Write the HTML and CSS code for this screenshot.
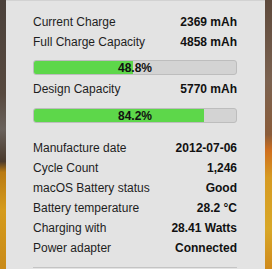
FILE: index.html
```html
<!DOCTYPE html>
<html>
  <head>
    <meta charset="utf-8">
    <title>Battery</title>
    <link rel="stylesheet" href="styles.css">
  </head>
  <body>
    <div class="desk">
      <div class="wall wall-left"></div>
      <div class="menu">
        <div class="row"><span>Current Charge</span><b>2369 mAh</b></div>
        <div class="row"><span>Full Charge Capacity</span><b>4858 mAh</b></div>
        <div class="bar">
          <div class="fill" style="width: 48.8%"></div>
          <span class="pct">48.8%</span>
        </div>
        <div class="row row-design"><span>Design Capacity</span><b>5770 mAh</b></div>
        <div class="bar">
          <div class="fill" style="width: 84.2%"></div>
          <span class="pct">84.2%</span>
        </div>
        <div class="details">
          <div class="row"><span>Manufacture date</span><b>2012-07-06</b></div>
          <div class="row"><span>Cycle Count</span><b>1,246</b></div>
          <div class="row"><span>macOS Battery status</span><b>Good</b></div>
          <div class="row"><span>Battery temperature</span><b>28.2 °C</b></div>
          <div class="row"><span>Charging with</span><b>28.41 Watts</b></div>
          <div class="row"><span>Power adapter</span><b>Connected</b></div>
        </div>
        <div class="sep"></div>
      </div>
      <div class="wall wall-right"></div>
    </div>
  </body>
</html>
```

FILE: styles.css
```css
body, html { margin: 0; padding: 0; height: 269px; overflow: hidden; font-family: "Liberation Sans", Arial, sans-serif; }
.desk { display: flex; height: 269px; }
.wall { flex: none; }
.wall-left { width: 6px; background: linear-gradient(to bottom, #4b413b 0%, #57493f 35%, #6a625c 48%, #4a3a2c 60%, #b97a12 64%, #d59b1c 78%, #c98a18 100%); }
.wall-right { width: 7px; background: linear-gradient(to bottom, #5e4a3d 0%, #7b6250 30%, #8a5c3a 50%, #cf6f1e 56%, #d69a22 66%, #d8a727 85%, #cf8a1c 100%); }
.menu { flex: 1; background: #e3e3e3; border-top: 1px solid #d2d2d2; padding: 10px 28px 1px 27px; display: flex; flex-direction: column; color: #1e1e1e; font-size: 12px; }
.row { display: flex; justify-content: space-between; align-items: flex-start; height: 20px; line-height: 22px; }
.row b { color: #111; }
.row-design { margin-top: 3px; }
.bar { display: grid; height: 13px; margin-top: 9px; border: 1px solid #bdbdbd; border-radius: 3px; background: #d3d3d3; overflow: hidden; }
.bar + .details { margin-top: 14px; }
.row-design + .bar { margin-top: 10px; }
.fill, .pct { grid-area: 1 / 1; }
.fill { background: #5dd74a; }
.pct { text-align: center; font-weight: bold; line-height: 14px; color: #111; }
.sep { height: 1px; background: #c4c4c4; margin-top: 10px; }
```
